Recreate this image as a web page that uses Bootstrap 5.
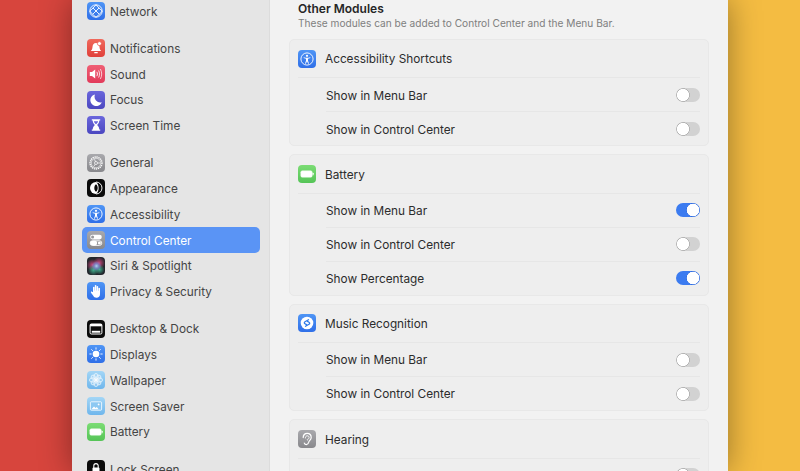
<!DOCTYPE html>
<html lang="en">
<head>
  <meta charset="UTF-8" />
  <meta name="viewport" content="width=device-width, initial-scale=1.0"/>
  <title>Control Center</title>
  <link href="https://cdn.jsdelivr.net/npm/bootstrap@5.3.0/dist/css/bootstrap.min.css" rel="stylesheet">
  <style>
    html, body { height: 471px; overflow: hidden; }
    body {
      font-family: "Inter", "Liberation Sans", sans-serif;
      font-size: 11.8px;
      background: linear-gradient(90deg, #d7453d 0, #d7453d 50%, #f4bc42 50%, #f4bc42 100%);
    }
    .icon-defs { display: block; width: 0; height: 0; }
    .app-window {
      width: 656px;
      height: 471px;
      margin-left: 72px;
      background: #f2f2f2;
      box-shadow: 0 0 30px rgba(0, 0, 0, .38);
    }
    .side-pane {
      width: 198px;
      padding: 0 9px 0 10px;
      background: #e5e5e5;
      border-right: 1px solid #dcdcdc;
      color: #444;
    }
    .side-list { margin-top: -2px; }
    .side-group { margin-bottom: 11.5px; }
    .side-row { height: 25.75px; padding-left: 5px; gap: 5px; border-radius: 5px; }
    .side-row span { padding-top: 3px; }
    .side-row.is-active { background: #5a94f5; color: #fff; }
    .app-icon { width: 18px; height: 18px; flex: none; }
    .main-pane { width: 458px; padding: 0 19px; color: #2c2c2c; }
    .pane-title { padding-left: 9px; font-size: 12px; font-weight: 600; line-height: 18px; height: 16px; color: #262626; }
    .pane-sub { padding-left: 9px; font-size: 10.15px; line-height: 15px; height: 23px; color: #808080; }
    .module-box {
      background: #eeeeee;
      border: 1px solid #e8e8e8;
      border-radius: 5px;
      margin-bottom: 8px;
    }
    .module-head { height: 38.4px; margin: 0 8px; gap: 9px; border-bottom: 1px solid #e6e6e6; }
    .module-head span { padding-top: 3px; }
    .module-row { height: 34px; margin: 0 8px 0 36px; border-bottom: 1px solid #e6e6e6; }
    .module-row span { padding-top: 3px; }
    .module-row:last-child { border-bottom: 0; height: 33px; }
    .form-switch.mini-switch { padding: 0; margin: 0; min-height: 0; line-height: 0; }
    .form-switch.mini-switch .form-check-input {
      width: 24px;
      height: 14px;
      margin: 0;
      border: 0;
      background-color: #d2d2d2;
      background-size: 100% 100%;
      background-position: 0 0;
      background-image: radial-gradient(circle 7px at 7px 7px, #fff 0, #fff 5.8px, #b4b4b4 6.3px, #b4b4b4 6.8px, transparent 7px);
    }
    .form-switch.mini-switch .form-check-input:checked {
      background-color: #3b7bf0;
      background-image: radial-gradient(circle 7px at 17px 7px, #fff 0, #fff 6px, #2f6be0 6.6px, transparent 7px);
    }
  </style>
</head>
<body>
  <svg class="icon-defs" xmlns="http://www.w3.org/2000/svg">
    <defs>
      <linearGradient id="gBlue" x1="0" y1="0" x2="0" y2="1"><stop offset="0" stop-color="#4f95f5"/><stop offset="1" stop-color="#2f6fe8"/></linearGradient>
      <linearGradient id="gRed" x1="0" y1="0" x2="0" y2="1"><stop offset="0" stop-color="#f0695c"/><stop offset="1" stop-color="#e0403a"/></linearGradient>
      <linearGradient id="gPink" x1="0" y1="0" x2="0" y2="1"><stop offset="0" stop-color="#ef5f74"/><stop offset="1" stop-color="#e23a5a"/></linearGradient>
      <linearGradient id="gIndigo" x1="0" y1="0" x2="0" y2="1"><stop offset="0" stop-color="#6a66dc"/><stop offset="1" stop-color="#4b47c0"/></linearGradient>
      <linearGradient id="gGrey" x1="0" y1="0" x2="0" y2="1"><stop offset="0" stop-color="#a9a9ad"/><stop offset="1" stop-color="#88888c"/></linearGradient>
      <linearGradient id="gSky" x1="0" y1="0" x2="0" y2="1"><stop offset="0" stop-color="#a3d6f6"/><stop offset="1" stop-color="#6fb6ec"/></linearGradient>
      <linearGradient id="gGreen" x1="0" y1="0" x2="0" y2="1"><stop offset="0" stop-color="#7bdc74"/><stop offset="1" stop-color="#55c457"/></linearGradient>
      <radialGradient id="gSiriA"><stop offset="0" stop-color="#d0487e"/><stop offset="1" stop-color="#d0487e" stop-opacity="0"/></radialGradient>
      <radialGradient id="gSiriB"><stop offset="0" stop-color="#3fae8c"/><stop offset="1" stop-color="#3fae8c" stop-opacity="0"/></radialGradient>
      <radialGradient id="gSiriC"><stop offset="0" stop-color="#a9d8ee"/><stop offset=".5" stop-color="#7f86d0" stop-opacity=".8"/><stop offset="1" stop-color="#7f86d0" stop-opacity="0"/></radialGradient>

      <symbol id="i-network" viewBox="0 0 18 18"><rect width="18" height="18" rx="4" fill="url(#gBlue)"/><g fill="none" stroke="#fff" stroke-width=".9"><circle cx="9" cy="9" r="6.200"/><path d="M9 2.800 6 6l3 3 3-3zM2.800 9 6 6M15.200 9 12 6M9 9l-3.400 3.400L9 15.200l3.400-2.800zM2.800 9l2.800 3.400M15.200 9l-2.800 3.400"/></g></symbol>
      <symbol id="i-bell" viewBox="0 0 18 18"><rect width="18" height="18" rx="4" fill="url(#gRed)"/><path d="M9 4c-2.400 0-3.400 2-3.500 4-.1 2-.8 3-1.700 4h10.400c-.9-1-1.600-2-1.700-4C12.400 6 11.400 4 9 4z" fill="#fff"/><rect x="7.200" y="13" width="3.600" height="1.300" rx=".6" fill="#fff"/><circle cx="12.400" cy="4.600" r="2" fill="#fff" stroke="#e8544b" stroke-width=".7"/></symbol>
      <symbol id="i-sound" viewBox="0 0 18 18"><rect width="18" height="18" rx="4" fill="url(#gPink)"/><path d="M2.800 7h2.200l3.200-2.600v9.200L5 11H2.800z" fill="#fff"/><g fill="none" stroke="#fff" stroke-linecap="round"><path d="M10 7.200c.6 1.100.6 2.500 0 3.600" stroke-width=".9"/><path d="M11.800 5.800c1 1.900 1 4.500 0 6.400" stroke-width=".8"/><path d="M13.600 4.400c1.500 2.800 1.500 6.400 0 9.200" stroke-width=".7"/></g></symbol>
      <symbol id="i-focus" viewBox="0 0 18 18"><rect width="18" height="18" rx="4" fill="url(#gIndigo)"/><path d="M8 3.400a5.900 5.900 0 1 0 6.800 7.800A5.800 5.800 0 0 1 8 3.400z" fill="#fff"/></symbol>
      <symbol id="i-hourglass" viewBox="0 0 18 18"><rect width="18" height="18" rx="4" fill="url(#gIndigo)"/><path d="M4.800 3.200h8.400v1.300h-.9c0 2.200-1.300 3.500-2.200 4.500.9 1 2.200 2.300 2.200 4.500h.9v1.300H4.800v-1.300h.9c0-2.200 1.300-3.500 2.200-4.500C7 8 5.700 6.700 5.700 4.500h-.9z" fill="#fff"/><path d="M6.900 5.200h4.200C10.900 6.600 9.800 7.500 9 8.200 8.200 7.500 7.100 6.600 6.900 5.200z" fill="#6a66dc"/></symbol>
      <symbol id="i-gear" viewBox="0 0 18 18"><rect width="18" height="18" rx="4" fill="url(#gGrey)"/><g fill="none" stroke="#fff"><circle cx="9" cy="9" r="6" stroke-width="1.300" stroke-dasharray="1.300 .7"/><circle cx="9" cy="9" r="4.800" stroke-width=".6"/><path d="M9 9 7.500 5.200M9 9h4M9 9l-2.200 3.500" stroke-width=".7"/><circle cx="9" cy="9" r="1.500" stroke-width=".7" fill="#98989c"/></g></symbol>
      <symbol id="i-appearance" viewBox="0 0 18 18"><rect width="18" height="18" rx="4" fill="#0b0b0b"/><circle cx="9" cy="9" r="6" fill="#fff"/><path d="M9 3a6 6 0 0 1 0 12c2-1.600 2.600-3.800 2.600-6S11 4.600 9 3z" fill="#0b0b0b"/><path d="M9 5.200c-1.300 1-1.700 2.400-1.700 3.800s.4 2.800 1.700 3.800c1.300-1 1.700-2.400 1.700-3.800S10.300 6.200 9 5.200z" fill="#0b0b0b"/><path d="M9 3a6 6 0 0 1 0 12" fill="none" stroke="#fff" stroke-width=".9"/></symbol>
      <symbol id="i-access" viewBox="0 0 18 18"><rect width="18" height="18" rx="4" fill="url(#gBlue)"/><circle cx="9" cy="9" r="6.100" fill="none" stroke="#fff" stroke-width=".9"/><circle cx="9" cy="5.800" r="1.100" fill="#fff"/><path d="M5.800 7.200c1 .4 2.100.6 3.200.6s2.200-.2 3.200-.6l.2.800-2.400.7v2l1 2.700-.8.300L9 11.200l-1.200 2.500-.8-.3 1-2.700v-2L5.600 8z" fill="#fff"/></symbol>
      <symbol id="i-control" viewBox="0 0 18 18"><rect width="18" height="18" rx="4" fill="url(#gGrey)"/><rect x="3.200" y="3.800" width="11.600" height="4.600" rx="2.300" fill="#fff"/><circle cx="5.600" cy="6.100" r="1.500" fill="#98989c"/><rect x="3.200" y="9.800" width="11.600" height="4.600" rx="2.300" fill="none" stroke="#fff" stroke-width=".9"/><rect x="3.200" y="9.800" width="7" height="4.600" rx="2.300" fill="#fff"/><circle cx="12.400" cy="12.100" r="1.500" fill="#fff"/></symbol>
      <symbol id="i-siri" viewBox="0 0 18 18"><rect width="18" height="18" rx="4" fill="#23262c"/><circle cx="5.500" cy="8" r="6" fill="url(#gSiriA)"/><circle cx="12" cy="6" r="6" fill="url(#gSiriA)"/><circle cx="6.500" cy="13" r="5.500" fill="url(#gSiriB)"/><circle cx="12.500" cy="12.500" r="5" fill="url(#gSiriB)"/><circle cx="9.500" cy="9" r="5" fill="url(#gSiriC)"/></symbol>
      <symbol id="i-hand" viewBox="0 0 18 18"><rect width="18" height="18" rx="4" fill="url(#gBlue)"/><path d="M6 10V5.200a.8.800 0 0 1 1.500 0V8.500h.3V3.800a.8.800 0 0 1 1.600 0v4.700h.3V4.500a.8.800 0 0 1 1.500 0v4.300h.3V6.200a.8.800 0 0 1 1.500 0v6c0 2.100-1.400 3.600-3.500 3.600-1.700 0-2.600-.7-3.400-2.200L4 10.800c-.5-1 .7-1.700 1.300-.9z" fill="#fff"/></symbol>
      <symbol id="i-desktop" viewBox="0 0 18 18"><rect width="18" height="18" rx="4" fill="#0b0b0b"/><rect x="3.100" y="4" width="11.800" height="10" rx="1.200" fill="none" stroke="#fff" stroke-width="1"/><rect x="3.100" y="4" width="11.800" height="2.300" fill="#fff"/><rect x="4.800" y="10.800" width="8.400" height="1.900" fill="#fff"/></symbol>
      <symbol id="i-sun" viewBox="0 0 18 18"><rect width="18" height="18" rx="4" fill="url(#gBlue)"/><circle cx="9" cy="9" r="3.300" fill="#fff"/><g stroke="#fff" stroke-width=".9" stroke-linecap="round"><path d="M9 2.800v1.400M9 13.800v1.400M2.800 9h1.400M13.800 9h1.400M4.600 4.600l1 1M12.400 12.400l1 1M4.600 13.400l1-1M12.400 5.600l1-1"/></g></symbol>
      <symbol id="i-flower" viewBox="0 0 18 18"><rect width="18" height="18" rx="4" fill="url(#gSky)"/><g fill="#fff" fill-opacity=".18" stroke="#fff" stroke-width=".6"><ellipse cx="9" cy="5.600" rx="2.200" ry="3.200"/><ellipse cx="9" cy="12.400" rx="2.200" ry="3.200"/><ellipse cx="5.600" cy="9" rx="3.200" ry="2.200"/><ellipse cx="12.400" cy="9" rx="3.200" ry="2.200"/><ellipse cx="6.600" cy="6.600" rx="2.800" ry="2" transform="rotate(45 6.600 6.600)"/><ellipse cx="11.400" cy="11.400" rx="2.800" ry="2" transform="rotate(45 11.400 11.400)"/><ellipse cx="11.400" cy="6.600" rx="2.800" ry="2" transform="rotate(-45 11.400 6.600)"/><ellipse cx="6.600" cy="11.400" rx="2.800" ry="2" transform="rotate(-45 6.600 11.400)"/></g></symbol>
      <symbol id="i-saver" viewBox="0 0 18 18"><rect width="18" height="18" rx="4" fill="url(#gSky)"/><rect x="3.400" y="4.800" width="11.200" height="8.400" rx=".8" fill="#8cc8f2" stroke="#fff" stroke-width=".8"/><path d="M4.400 12.200 7 9.600l1.600 1.400 1.200-1 1.800 2.200z" fill="#fff"/><circle cx="11.600" cy="7.400" r=".9" fill="#fff"/></symbol>
      <symbol id="i-battery" viewBox="0 0 18 18"><rect width="18" height="18" rx="4" fill="url(#gGreen)"/><rect x="2.800" y="5.800" width="11.400" height="6.400" rx="1.500" fill="#fff" stroke="#eafbe8" stroke-width=".5"/><rect x="14.600" y="7.800" width="1" height="2.400" rx=".5" fill="#fff"/></symbol>
      <symbol id="i-lock" viewBox="0 0 18 18"><rect width="18" height="18" rx="4" fill="#0b0b0b"/><rect x="5.500" y="7.500" width="7" height="7" rx="1" fill="#fff"/><path d="M6.800 8V5.800a2.200 2.200 0 0 1 4.400 0V8" fill="none" stroke="#fff" stroke-width="1.100"/></symbol>
      <symbol id="i-shazam" viewBox="0 0 18 18"><rect width="18" height="18" rx="4" fill="url(#gBlue)"/><circle cx="9" cy="9" r="6.300" fill="#fff"/><path d="M10.500 5.800 7 7.700c-.9.500-.9 1.600 0 2.100l1.500.8M7.500 12.200l3.500-1.900c.9-.5.9-1.600 0-2.100l-1.500-.8" fill="none" stroke="#2f7bea" stroke-width="1.300" stroke-linecap="round"/></symbol>
      <symbol id="i-ear" viewBox="0 0 18 18"><rect width="18" height="18" rx="4" fill="url(#gGrey)"/><path d="M5.200 7.600C5.200 5 7 3.400 9.200 3.400c2.400 0 4 1.700 4 4 0 2.600-2.200 3-2.500 4.800-.3 1.500-1 2.400-2.300 2.400-1 0-1.800-.6-2.100-1.500" fill="none" stroke="#fff" stroke-width="1.200" stroke-linecap="round"/><path d="M7.400 8c0-1.300.8-2.200 1.900-2.200s1.800.8 1.800 1.800c0 1-.9 1.300-1.500 1.600-.5.300-.4.900 0 1.200" fill="none" stroke="#fff" stroke-width=".9" stroke-linecap="round"/></symbol>
    </defs>
  </svg>

  <div class="app-window d-flex">
    <!-- sidebar -->
    <div class="side-pane">
      <div class="side-list">
        <div class="side-group">
          <div class="side-row d-flex align-items-center"><svg class="app-icon"><use href="#i-network"/></svg><span>Network</span></div>
        </div>
        <div class="side-group">
          <div class="side-row d-flex align-items-center"><svg class="app-icon"><use href="#i-bell"/></svg><span>Notifications</span></div>
          <div class="side-row d-flex align-items-center"><svg class="app-icon"><use href="#i-sound"/></svg><span>Sound</span></div>
          <div class="side-row d-flex align-items-center"><svg class="app-icon"><use href="#i-focus"/></svg><span>Focus</span></div>
          <div class="side-row d-flex align-items-center"><svg class="app-icon"><use href="#i-hourglass"/></svg><span>Screen Time</span></div>
        </div>
        <div class="side-group">
          <div class="side-row d-flex align-items-center"><svg class="app-icon"><use href="#i-gear"/></svg><span>General</span></div>
          <div class="side-row d-flex align-items-center"><svg class="app-icon"><use href="#i-appearance"/></svg><span>Appearance</span></div>
          <div class="side-row d-flex align-items-center"><svg class="app-icon"><use href="#i-access"/></svg><span>Accessibility</span></div>
          <div class="side-row is-active d-flex align-items-center"><svg class="app-icon"><use href="#i-control"/></svg><span>Control Center</span></div>
          <div class="side-row d-flex align-items-center"><svg class="app-icon"><use href="#i-siri"/></svg><span>Siri &amp; Spotlight</span></div>
          <div class="side-row d-flex align-items-center"><svg class="app-icon"><use href="#i-hand"/></svg><span>Privacy &amp; Security</span></div>
        </div>
        <div class="side-group">
          <div class="side-row d-flex align-items-center"><svg class="app-icon"><use href="#i-desktop"/></svg><span>Desktop &amp; Dock</span></div>
          <div class="side-row d-flex align-items-center"><svg class="app-icon"><use href="#i-sun"/></svg><span>Displays</span></div>
          <div class="side-row d-flex align-items-center"><svg class="app-icon"><use href="#i-flower"/></svg><span>Wallpaper</span></div>
          <div class="side-row d-flex align-items-center"><svg class="app-icon"><use href="#i-saver"/></svg><span>Screen Saver</span></div>
          <div class="side-row d-flex align-items-center"><svg class="app-icon"><use href="#i-battery"/></svg><span>Battery</span></div>
        </div>
        <div class="side-group">
          <div class="side-row d-flex align-items-center"><svg class="app-icon"><use href="#i-lock"/></svg><span>Lock Screen</span></div>
        </div>
      </div>
    </div>

    <!-- settings -->
    <div class="main-pane">
      <div class="pane-title">Other Modules</div>
      <div class="pane-sub">These modules can be added to Control Center and the Menu Bar.</div>

      <div class="module-box">
        <div class="module-head d-flex align-items-center"><svg class="app-icon"><use href="#i-access"/></svg><span>Accessibility Shortcuts</span></div>
        <div class="module-row d-flex align-items-center justify-content-between"><span>Show in Menu Bar</span><div class="form-check form-switch mini-switch"><input class="form-check-input" type="checkbox" role="switch"></div></div>
        <div class="module-row d-flex align-items-center justify-content-between"><span>Show in Control Center</span><div class="form-check form-switch mini-switch"><input class="form-check-input" type="checkbox" role="switch"></div></div>
      </div>

      <div class="module-box">
        <div class="module-head d-flex align-items-center"><svg class="app-icon"><use href="#i-battery"/></svg><span>Battery</span></div>
        <div class="module-row d-flex align-items-center justify-content-between"><span>Show in Menu Bar</span><div class="form-check form-switch mini-switch"><input class="form-check-input" type="checkbox" role="switch" checked></div></div>
        <div class="module-row d-flex align-items-center justify-content-between"><span>Show in Control Center</span><div class="form-check form-switch mini-switch"><input class="form-check-input" type="checkbox" role="switch"></div></div>
        <div class="module-row d-flex align-items-center justify-content-between"><span>Show Percentage</span><div class="form-check form-switch mini-switch"><input class="form-check-input" type="checkbox" role="switch" checked></div></div>
      </div>

      <div class="module-box">
        <div class="module-head d-flex align-items-center"><svg class="app-icon"><use href="#i-shazam"/></svg><span>Music Recognition</span></div>
        <div class="module-row d-flex align-items-center justify-content-between"><span>Show in Menu Bar</span><div class="form-check form-switch mini-switch"><input class="form-check-input" type="checkbox" role="switch"></div></div>
        <div class="module-row d-flex align-items-center justify-content-between"><span>Show in Control Center</span><div class="form-check form-switch mini-switch"><input class="form-check-input" type="checkbox" role="switch"></div></div>
      </div>

      <div class="module-box">
        <div class="module-head d-flex align-items-center"><svg class="app-icon"><use href="#i-ear"/></svg><span>Hearing</span></div>
        <div class="module-row d-flex align-items-center justify-content-end"><div class="form-check form-switch mini-switch"><input class="form-check-input" type="checkbox" role="switch"></div></div>
      </div>
    </div>
  </div>

  <script src="https://cdn.jsdelivr.net/npm/bootstrap@5.3.0/dist/js/bootstrap.bundle.min.js"></script>
</body>
</html>
